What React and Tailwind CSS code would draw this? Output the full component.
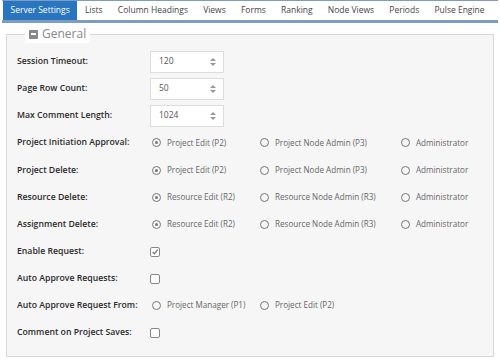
import React from "react";

const tabs = ["Server Settings", "Lists", "Column Headings", "Views", "Forms", "Ranking", "Node Views", "Periods", "Pulse Engine"];

function Radio({ checked, label }) {
  return (
    <label className="flex items-center gap-[6px] text-[8.1px] text-[#666] whitespace-nowrap">
      <span className="w-[9px] h-[9px] rounded-full border-[1.5px] border-[#777] flex items-center justify-center">
        {checked && <span className="w-[3px] h-[3px] rounded-full bg-[#777]" />}
      </span>
      {label}
    </label>
  );
}

function Check({ checked }) {
  return (
    <span className="w-[10px] h-[10px] rounded-[2px] border border-[#888] flex items-center justify-center bg-white">
      {checked && (
        <svg width="10" height="10" viewBox="0 0 10 10">
          <path d="M2 5 L4.2 7.2 L8.5 2" fill="none" stroke="#777" strokeWidth="1.6" />
        </svg>
      )}
    </span>
  );
}

function Spin({ value }) {
  return (
    <div className="w-[74px] h-[22px] bg-white border border-[#ddd] flex items-center justify-between pl-[8px] pr-[6px] text-[8.5px] text-[#555]">
      <span>{value}</span>
      <svg width="8" height="12" viewBox="0 0 8 12">
        <path d="M1 5 L4 2 L7 5 Z" fill="#999" />
        <path d="M1 7 L4 10 L7 7 Z" fill="#999" />
      </svg>
    </div>
  );
}

function Row({ label, children, h = "h-[27px]" }) {
  return (
    <div className={`flex items-center ${h}`}>
      <div className="w-[133px] text-[8.7px] font-semibold text-[#2a2a2a] whitespace-nowrap">{label}</div>
      {children}
    </div>
  );
}

function Radios3({ a, b }) {
  return (
    <div className="flex items-center pl-[2px]">
      <div className="w-[108px]"><Radio checked label={a} /></div>
      <div className="w-[141px]"><Radio label={b} /></div>
      <Radio label="Administrator" />
    </div>
  );
}

export default function App() {
  return (
    <div className="w-[500px] h-[362px] bg-white overflow-hidden" style={{ fontFamily: "'Open Sans', sans-serif" }}>
      <div className="mx-[2px] border-t-[1.5px] border-b-[3px] border-[#7e9cbf] h-[23px] flex items-stretch pl-[1px]">
        {tabs.map((t, i) => (
          <div
            key={t}
            className={`flex items-center px-[7.6px] text-[8.5px] whitespace-nowrap ${i === 0 ? "bg-[#2a75c0] text-white" : "text-[#444]"}`}
          >
            {t}
          </div>
        ))}
      </div>
      <fieldset className="mx-[6px] mt-[2px] h-[332px] border border-[#d8d8d8] bg-[#f6f6f6] px-[10px]">
        <legend className="ml-[8px] px-[4px] flex items-center gap-[4px] text-[12px] text-[#888] bg-white">
          <span className="w-[9px] h-[9px] bg-[#888] rounded-[1px] flex items-center justify-center">
            <span className="w-[5px] h-[1.5px] bg-white" />
          </span>
          General
        </legend>
        <div className="pt-[5px]">
          <Row label="Session Timeout:"><Spin value="120" /></Row>
          <Row label="Page Row Count:"><Spin value="50" /></Row>
          <Row label="Max Comment Length:"><Spin value="1024" /></Row>
          <Row label="Project Initiation Approval:" h="h-[28px]"><Radios3 a="Project Edit (P2)" b="Project Node Admin (P3)" /></Row>
          <Row label="Project Delete:"><Radios3 a="Project Edit (P2)" b="Project Node Admin (P3)" /></Row>
          <Row label="Resource Delete:"><Radios3 a="Resource Edit (R2)" b="Resource Node Admin (R3)" /></Row>
          <Row label="Assignment Delete:"><Radios3 a="Resource Edit (R2)" b="Resource Node Admin (R3)" /></Row>
          <Row label="Enable Request:"><Check checked /></Row>
          <Row label="Auto Approve Requests:"><Check /></Row>
          <Row label="Auto Approve Request From:">
            <div className="flex items-center pl-[2px]">
              <div className="w-[108px]"><Radio label="Project Manager (P1)" /></div>
              <Radio label="Project Edit (P2)" />
            </div>
          </Row>
          <Row label="Comment on Project Saves:"><Check /></Row>
        </div>
      </fieldset>
    </div>
  );
}
